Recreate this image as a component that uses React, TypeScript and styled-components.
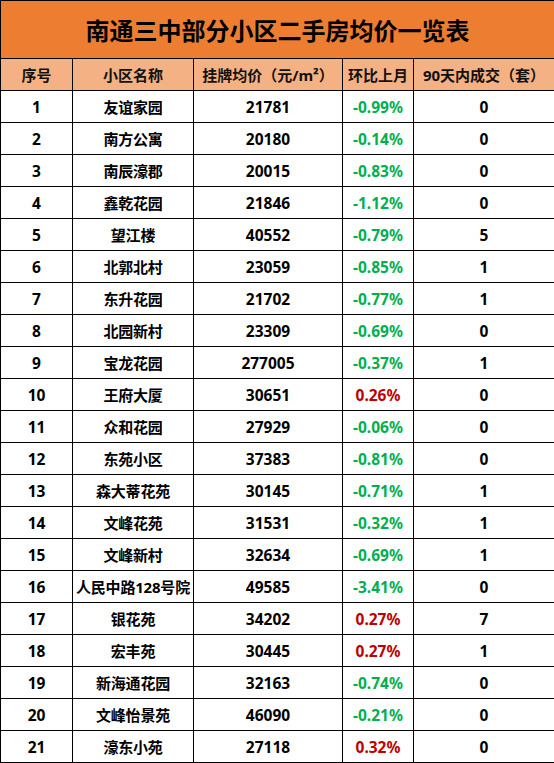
import styled, { createGlobalStyle } from 'styled-components';

const GlobalStyle = createGlobalStyle`
    html, body {
        margin: 0;
        padding: 0;
        background: #ffffff;
    }
    body {
        font-family: "Noto Sans", "Noto Sans CJK SC", sans-serif;
    }
`

const StyledTable = styled.table`
    width: 554px;
    table-layout: fixed;
    border-collapse: collapse;
    font-weight: 700;
    color: #000;

    td, th {
        border: 1px solid #000;
        padding: 0;
        text-align: center;
        vertical-align: middle;
        white-space: nowrap;
        overflow: hidden;
    }
`

const TitleCell = styled.th`
    height: 57px;
    background-color: #ED7D31;
    font-family: "Noto Sans CJK SC", sans-serif;
    font-size: 24px;
    font-weight: 700;
`

const HeadCell = styled.th`
    height: 31px;
    background-color: #F4B183;
    font-family: "Noto Sans", "Noto Sans CJK SC", sans-serif;
    font-size: 15px;
    font-weight: 700;
    color: #111;
`

const Cell = styled.td<{ $text?: boolean }>`
    height: 31px;
    font-size: ${({ $text }) => ($text ? '15px' : '15.5px')};
    letter-spacing: ${({ $text }) => ($text ? '-0.2px' : '0')};
`

const Change = styled(Cell)<{ $up: boolean }>`
    color: ${({ $up }) => ($up ? '#C00000' : '#00B050')};
`

type Row = [string, number, string, number];

const rows: Row[] = [
    ['友谊家园', 21781, '-0.99%', 0],
    ['南方公寓', 20180, '-0.14%', 0],
    ['南辰濠郡', 20015, '-0.83%', 0],
    ['鑫乾花园', 21846, '-1.12%', 0],
    ['望江楼', 40552, '-0.79%', 5],
    ['北郭北村', 23059, '-0.85%', 1],
    ['东升花园', 21702, '-0.77%', 1],
    ['北园新村', 23309, '-0.69%', 0],
    ['宝龙花园', 277005, '-0.37%', 1],
    ['王府大厦', 30651, '0.26%', 0],
    ['众和花园', 27929, '-0.06%', 0],
    ['东苑小区', 37383, '-0.81%', 0],
    ['森大蒂花苑', 30145, '-0.71%', 1],
    ['文峰花苑', 31531, '-0.32%', 1],
    ['文峰新村', 32634, '-0.69%', 1],
    ['人民中路128号院', 49585, '-3.41%', 0],
    ['银花苑', 34202, '0.27%', 7],
    ['宏丰苑', 30445, '0.27%', 1],
    ['新海通花园', 32163, '-0.74%', 0],
    ['文峰怡景苑', 46090, '-0.21%', 0],
    ['濠东小苑', 27118, '0.32%', 0],
];

const App = () => {
    return (
        <>
            <GlobalStyle />
            <StyledTable>
                <colgroup>
                    <col style={{ width: 72 }} />
                    <col style={{ width: 121 }} />
                    <col style={{ width: 149 }} />
                    <col style={{ width: 71 }} />
                    <col style={{ width: 141 }} />
                </colgroup>
                <thead>
                    <tr>
                        <TitleCell colSpan={5}>南通三中部分小区二手房均价一览表</TitleCell>
                    </tr>
                    <tr>
                        <HeadCell>序号</HeadCell>
                        <HeadCell>小区名称</HeadCell>
                        <HeadCell>挂牌均价（元/m²）</HeadCell>
                        <HeadCell>环比上月</HeadCell>
                        <HeadCell>90天内成交（套）</HeadCell>
                    </tr>
                </thead>
                <tbody>
                    {rows.map(([name, price, change, deals], i) => (
                        <tr key={name}>
                            <Cell>{i + 1}</Cell>
                            <Cell $text>{name}</Cell>
                            <Cell>{price}</Cell>
                            <Change $up={!change.startsWith('-')}>{change}</Change>
                            <Cell>{deals}</Cell>
                        </tr>
                    ))}
                </tbody>
            </StyledTable>
        </>
    );
}

export default App;
